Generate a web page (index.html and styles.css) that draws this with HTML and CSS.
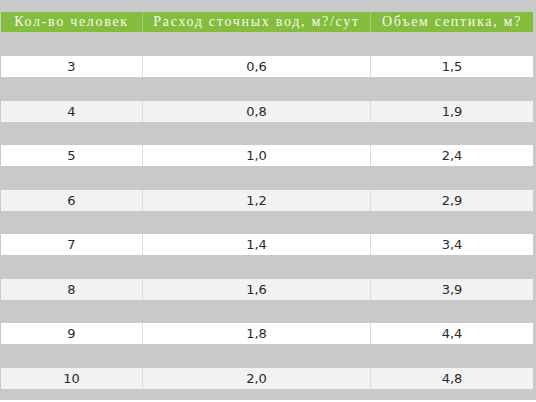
FILE: index.html
```html
<!DOCTYPE html>
<html lang="ru">
<head>
<meta charset="utf-8">
<title>Таблица септика</title>
<link rel="stylesheet" href="styles.css">
</head>
<body>
<div class="frame">
  <div class="table">
    <div class="row head">
      <div class="cell">Кол-во человек</div>
      <div class="cell">Расход сточных вод, м?/сут</div>
      <div class="cell">Объем септика, м?</div>
    </div>
    <div class="row odd"><div class="cell">3</div><div class="cell">0,6</div><div class="cell">1,5</div></div>
    <div class="row even"><div class="cell">4</div><div class="cell">0,8</div><div class="cell">1,9</div></div>
    <div class="row odd"><div class="cell">5</div><div class="cell">1,0</div><div class="cell">2,4</div></div>
    <div class="row even"><div class="cell">6</div><div class="cell">1,2</div><div class="cell">2,9</div></div>
    <div class="row odd"><div class="cell">7</div><div class="cell">1,4</div><div class="cell">3,4</div></div>
    <div class="row even"><div class="cell">8</div><div class="cell">1,6</div><div class="cell">3,9</div></div>
    <div class="row odd"><div class="cell">9</div><div class="cell">1,8</div><div class="cell">4,4</div></div>
    <div class="row even"><div class="cell">10</div><div class="cell">2,0</div><div class="cell">4,8</div></div>
  </div>
</div>
</body>
</html>
```

FILE: styles.css
```css
html, body {
  margin: 0;
  padding: 0;
  background: #ffffff;
}
.frame {
  width: 536px;
  height: 400px;
  box-sizing: border-box;
  background: #c9c9c9;
  padding: 12px 3px 0 1px;
}
.table {
  display: grid;
  row-gap: 23.5px;
}
.row {
  display: grid;
  grid-template-columns: 141px 228px 163px;
}
.cell {
  display: flex;
  align-items: center;
  justify-content: center;
  font-family: "DejaVu Sans", sans-serif;
  font-size: 13px;
  color: #2a2a2a;
  height: 21px;
}
.cell + .cell {
  border-left: 1px solid #dcdcdc;
}
.head {
  margin-bottom: 0.5px;
}
.head .cell {
  height: 20px;
  background: #84bd3d;
  color: #f4faec;
  font-family: "Liberation Serif", serif;
  font-size: 14px;
  letter-spacing: 1.7px;
}
.head .cell + .cell {
  border-left: 1px solid #a6cf74;
}
.odd .cell {
  background: #ffffff;
}
.even .cell {
  background: #f2f2f2;
}
```
